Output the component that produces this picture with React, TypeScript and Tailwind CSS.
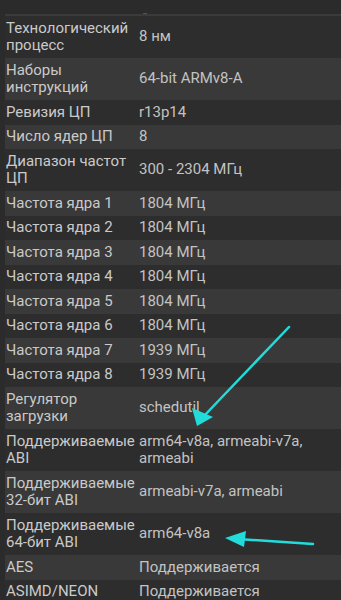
const rows: [string, string][] = [
  ['Технологический процесс', '8 нм'],
  ['Наборы инструкций', '64-bit ARMv8-A'],
  ['Ревизия ЦП', 'r13p14'],
  ['Число ядер ЦП', '8'],
  ['Диапазон частот ЦП', '300 - 2304 МГц'],
  ['Частота ядра 1', '1804 МГц'],
  ['Частота ядра 2', '1804 МГц'],
  ['Частота ядра 3', '1804 МГц'],
  ['Частота ядра 4', '1804 МГц'],
  ['Частота ядра 5', '1804 МГц'],
  ['Частота ядра 6', '1804 МГц'],
  ['Частота ядра 7', '1939 МГц'],
  ['Частота ядра 8', '1939 МГц'],
  ['Регулятор загрузки', 'schedutil'],
  ['Поддерживаемые ABI', 'arm64-v8a, armeabi-v7a, armeabi'],
  ['Поддерживаемые 32-бит ABI', 'armeabi-v7a, armeabi'],
  ['Поддерживаемые 64-бит ABI', 'arm64-v8a'],
  ['AES', 'Поддерживается'],
  ['ASIMD/NEON', 'Поддерживается'],
];

export default function App() {
  return (
    <div
      className="relative w-[341px] h-[600px] overflow-hidden bg-[#2b2b2b] text-[15px] leading-[17.5px]"
      style={{ fontFamily: 'Roboto, "Noto Sans", sans-serif' }}
    >
      {/* top edge / separator */}
      <div className="h-[14px] flex justify-start pl-[143px] items-end">
        <div className="w-[4px] h-[1px] bg-[#555]" />
      </div>
      <div className="ml-[5px] h-[2px] bg-[#3b3b3b]" />

      {/* Table */}
      <div className="ml-[5px] flex flex-col">
        {rows.map(([label, value], i) => (
          <div
            key={i}
            className={
              'flex items-center py-[3.5px] ' + (i % 2 === 1 ? 'bg-[#393939]' : 'bg-[#2d2d2d]')
            }
          >
            <div className="w-[134px] shrink-0 pl-[1px] pr-[3px] text-[#cacaca]">{label}</div>
            <div className="flex-1 pr-[8px] text-[#c3c3c3]">{value}</div>
          </div>
        ))}
      </div>

      {/* Annotation arrows */}
      <svg
        className="absolute inset-0 pointer-events-none"
        width="341"
        height="600"
        viewBox="0 0 341 600"
      >
        <line x1="289" y1="327" x2="204" y2="416" stroke="#22dcdc" strokeWidth="2.5" strokeLinecap="round" />
        <polygon points="197,426 192,408 213,417" fill="#22dcdc" />
        <line x1="313" y1="544" x2="238" y2="539" stroke="#22dcdc" strokeWidth="2.5" strokeLinecap="round" />
        <polygon points="225,538 246,531 244,547" fill="#22dcdc" />
      </svg>
    </div>
  );
}
